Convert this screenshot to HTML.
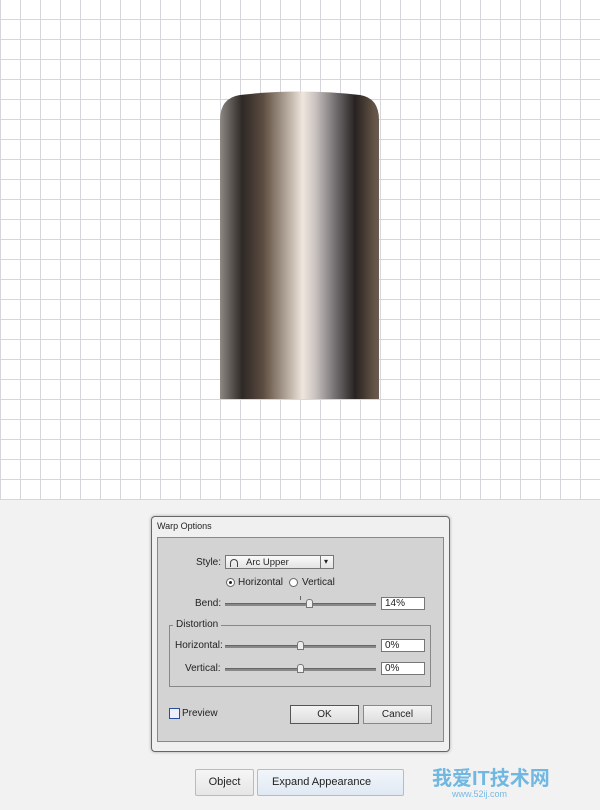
<!DOCTYPE html>
<html><head><meta charset="utf-8"><style>
*{margin:0;padding:0;box-sizing:border-box}
body{width:600px;height:810px;overflow:hidden;background:#f2f2f2;font-family:"Liberation Sans",sans-serif;font-size:10px;color:#222;position:relative}
.grid{position:absolute;left:0;top:0;width:600px;height:500px;background-color:#fff;
background-image:linear-gradient(to right,#d6d6dc 1px,transparent 1px),linear-gradient(to bottom,#d6d6dc 1px,transparent 1px);
background-size:20px 20px;background-position:0 -1px}
.abs{position:absolute}
.dlg{left:151px;top:516px;width:299px;height:236px;background:#f0f0f0;border:1px solid #666;border-radius:4px;box-shadow:0 0 3px #aaa}
.panel{left:157px;top:537px;width:287px;height:205px;background:#d3d3d3;border:1px solid #888}
.field{background:#fff;border:1px solid #777;height:13px;width:44px;padding-left:3px;font-size:10px;line-height:11px}
.track{height:3px;background:#888;border-top:1px solid #666;width:151px}
.thumb{width:7px;height:9px;background:#eee;border:1px solid #777;border-radius:3px 3px 0 0}
.btn{border:1px solid #555;background:linear-gradient(#f4f4f4,#ddd);text-align:center;font-size:10px;line-height:17px;height:19px}
</style></head><body>
<div class="grid"></div>
<svg class="abs" style="left:0;top:0" width="600" height="500">
<defs><linearGradient id="g" x1="220" x2="379" y1="0" y2="0" gradientUnits="userSpaceOnUse">
<stop offset="0" stop-color="#8e8883"/><stop offset="0.14" stop-color="#2e2826"/><stop offset="0.27" stop-color="#5c4c40"/>
<stop offset="0.42" stop-color="#b3a69a"/><stop offset="0.52" stop-color="#efe6de"/><stop offset="0.6" stop-color="#c9c2c0"/>
<stop offset="0.72" stop-color="#767274"/><stop offset="0.85" stop-color="#282222"/><stop offset="0.96" stop-color="#5f5042"/><stop offset="1" stop-color="#6a5c50"/></linearGradient></defs>
<path d="M220 399 L220 120 Q220 98 240 95 Q300 88 360 95 Q379 98 379 120 L379 399 Z" fill="url(#g)"/>
</svg>
<div class="abs dlg"></div>
<div class="abs" style="left:157px;top:521px;font-size:9px">Warp Options</div>
<div class="abs panel"></div>
<div class="abs" style="left:196px;top:557px">Style:</div>
<div class="abs" style="left:225px;top:555px;width:109px;height:14px;border:1px solid #777;background:linear-gradient(#fafafa,#e4e4e4)"></div>
<div class="abs" style="left:230px;top:559px;width:8px;height:8px;border:1px solid #444;border-bottom:none;border-radius:4px 4px 0 0"></div>
<div class="abs" style="left:246px;top:557px;font-size:9.5px">Arc Upper</div>
<div class="abs" style="left:320px;top:556px;width:1px;height:12px;background:#777"></div>
<div class="abs" style="left:324px;top:557px;font-size:8px">▾</div>
<div class="abs" style="left:226px;top:578px;width:9px;height:9px;border:1px solid #666;border-radius:50%;background:#fff"></div>
<div class="abs" style="left:229px;top:581px;width:3px;height:3px;border-radius:50%;background:#222"></div>
<div class="abs" style="left:238px;top:577px">Horizontal</div>
<div class="abs" style="left:289px;top:578px;width:9px;height:9px;border:1px solid #666;border-radius:50%;background:#fff"></div>
<div class="abs" style="left:302px;top:577px">Vertical</div>
<div class="abs" style="left:195px;top:598px">Bend:</div>
<div class="abs track" style="left:225px;top:603px"></div>
<div class="abs" style="left:300px;top:596px;width:1px;height:4px;background:#666"></div>
<div class="abs thumb" style="left:306px;top:599px"></div>
<div class="abs field" style="left:381px;top:597px">14%</div>
<div class="abs" style="left:169px;top:625px;width:262px;height:62px;border:1px solid #888"></div>
<div class="abs" style="left:173px;top:619px;background:#d3d3d3;padding:0 3px">Distortion</div>
<div class="abs" style="left:175px;top:640px">Horizontal:</div>
<div class="abs track" style="left:225px;top:645px"></div>
<div class="abs thumb" style="left:297px;top:641px"></div>
<div class="abs field" style="left:381px;top:639px">0%</div>
<div class="abs" style="left:185px;top:663px">Vertical:</div>
<div class="abs track" style="left:225px;top:668px"></div>
<div class="abs thumb" style="left:297px;top:664px"></div>
<div class="abs field" style="left:381px;top:662px">0%</div>
<div class="abs" style="left:169px;top:708px;width:11px;height:11px;border:1px solid #2a4f9a;background:#eef"></div>
<div class="abs" style="left:182px;top:708px">Preview</div>
<div class="abs btn" style="left:290px;top:705px;width:69px">OK</div>
<div class="abs btn" style="left:363px;top:705px;width:69px;border-color:#888">Cancel</div>
<div class="abs" style="left:195px;top:769px;width:59px;height:27px;border:1px solid #bbb;border-radius:2px;background:linear-gradient(#f6f6f6,#e6e6e6);text-align:center;line-height:25px;font-size:11px">Object</div>
<div class="abs" style="left:257px;top:769px;width:147px;height:27px;border:1px solid #bbb;border-radius:2px;background:linear-gradient(#f2f6fb,#e0e9f3);padding-left:14px;line-height:25px;font-size:11px">Expand Appearance</div>
<div class="abs" style="left:432px;top:762px;font-size:20px;font-weight:bold;color:#5aaee0;font-family:'Liberation Sans','Noto Sans CJK SC',sans-serif;opacity:.85">我爱IT技术网</div>
<div class="abs" style="left:452px;top:789px;font-size:9px;color:#7ab8e0">www.52ij.com</div>
</body></html>
